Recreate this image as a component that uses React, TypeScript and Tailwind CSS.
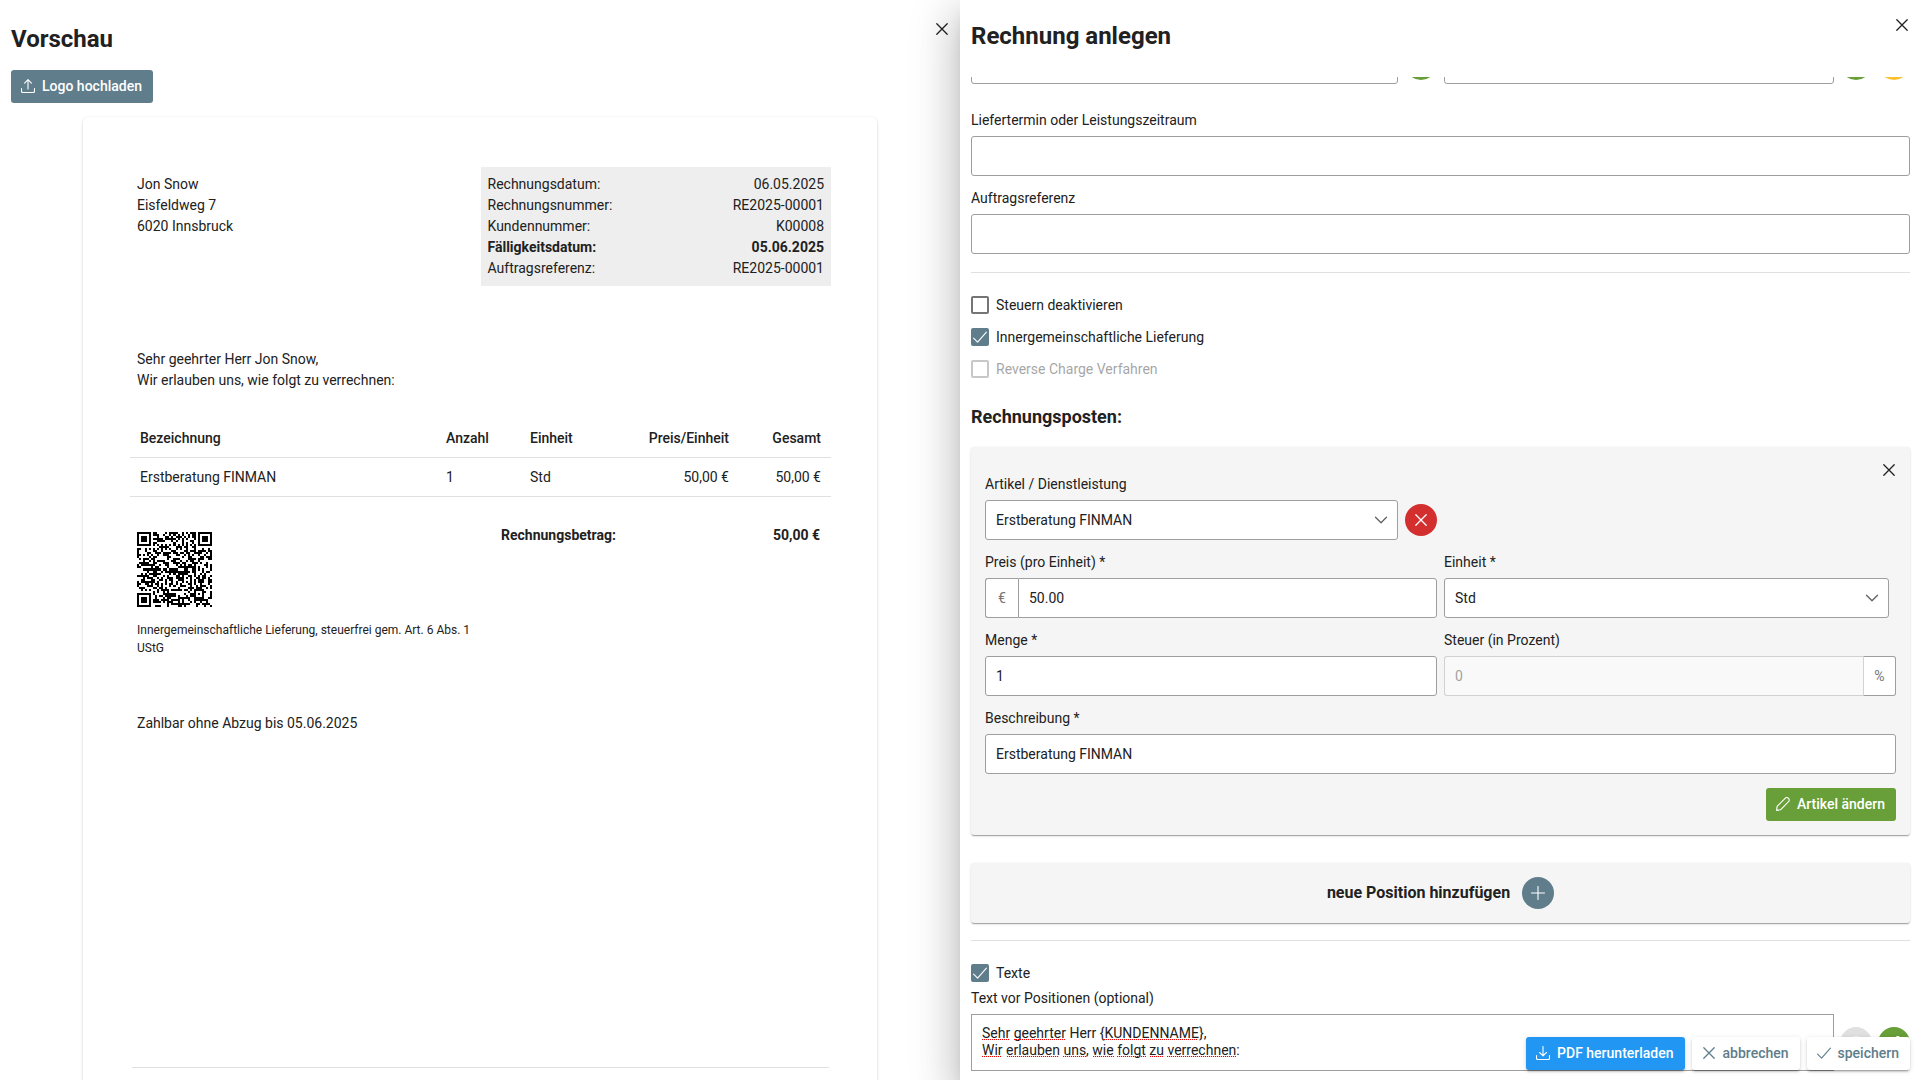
import { useState } from 'react';
import type { ReactNode } from 'react';

const ICONS = {
  upload: 'M7 10V0.8M3.6 4.1L7 0.7l3.4 3.4M0.5 9.5v2.6c0 .8.6 1.4 1.4 1.4h10.2c.8 0 1.4-.6 1.4-1.4V9.5',
  download: 'M7 0.5V9.8M3.6 6.5L7 9.9l3.4-3.4M0.5 9.5v2.6c0 .8.6 1.4 1.4 1.4h10.2c.8 0 1.4-.6 1.4-1.4V9.5',
  times: 'M1.8 1.8l10.4 10.4M12.2 1.8L1.8 12.2',
  plus: 'M7 0.5v13M0.5 7h13',
  check: 'M0.6 8.2l4 4L13.4 2.2',
  chevron: 'M1.5 4.2L7 9.7l5.5-5.5',
  pencil: 'M0.6 13.4l.5-4 8-8.1c.9-.9 2.4-.9 3.4 0 1 1 1 2.5 0 3.4l-8 8.1z',
  question: 'M3.6 4.200C3.600 2 5 0.800 7 0.800s3.400 1.300 3.400 3.200c0 2.600-3.400 2.500-3.400 5M7 12.500v.6',
};

const Icon = ({ name, className = 'w-3.5 h-3.5' }: { name: keyof typeof ICONS; className?: string }) => (
  <svg
    viewBox="0 0 14 14"
    className={`shrink-0 ${className}`}
    fill="none"
    stroke="currentColor"
    strokeWidth={name === 'times' || name === 'chevron' ? 1.3 : 1.1}
    strokeLinecap="round"
    strokeLinejoin="round"
    aria-hidden="true"
  >
    <path d={ICONS[name]} />
  </svg>
);

const QR_SIZE = 37;

const finder = (x: number, y: number, ox: number, oy: number) => {
  const dx = x - ox;
  const dy = y - oy;
  if (dx < -1 || dy < -1 || dx > 7 || dy > 7) return null;
  const d = Math.max(Math.abs(dx - 3), Math.abs(dy - 3));
  return d === 3 || d <= 1;
};

const qrPath = () => {
  let seed = 20250506;
  let path = '';
  for (let y = 0; y < QR_SIZE; y++) {
    for (let x = 0; x < QR_SIZE; x++) {
      seed = (seed * 1103515245 + 12345) % 2147483648;
      let on = seed / 2147483648 > 0.5;
      if (x === 6) on = y % 2 === 0;
      if (y === 6) on = x % 2 === 0;
      const align = Math.max(Math.abs(x - 30), Math.abs(y - 30));
      if (align <= 2) on = align !== 1;
      const f = finder(x, y, 0, 0) ?? finder(x, y, QR_SIZE - 7, 0) ?? finder(x, y, 0, QR_SIZE - 7);
      if (f !== null) on = f;
      if (on) path += `M${x} ${y}h1v1h-1z`;
    }
  }
  return path;
};

const inputClass =
  'h-10 w-full min-w-0 rounded-[3px] border border-[#9e9e9e] bg-white px-2.5 text-sm text-[#212121] outline-none focus:border-[#607d8b]';

const Field = ({ label, id, children }: { label: string; id: string; children: ReactNode }) => (
  <div>
    <label htmlFor={id} className="block mb-1.5 text-sm leading-5">
      {label}
    </label>
    {children}
  </div>
);

const Select = ({ id, value, className = '' }: { id: string; value: string; className?: string }) => (
  <div className={`relative ${className}`}>
    <select id={id} defaultValue={value} className={`${inputClass} appearance-none`}>
      <option>{value}</option>
    </select>
    <Icon name="chevron" className="absolute right-2.5 top-[13px] w-3.5 h-3.5 text-[#616161] pointer-events-none" />
  </div>
);

const Round = ({ label, className, children }: { label: string; className: string; children?: ReactNode }) => (
  <button
    type="button"
    aria-label={label}
    className={`w-8 h-8 shrink-0 rounded-full flex items-center justify-center text-white ${className}`}
  >
    {children}
  </button>
);

const Checkbox = ({ id, label, initial = false, disabled = false }: { id: string; label: string; initial?: boolean; disabled?: boolean }) => {
  const [checked, setChecked] = useState(initial);
  return (
    <div className={`flex items-center gap-[7px] h-[18px] ${disabled ? 'opacity-40' : ''}`}>
      <span className="relative w-[18px] h-[18px]">
        <input
          id={id}
          type="checkbox"
          checked={checked}
          disabled={disabled}
          onChange={(e) => setChecked(e.target.checked)}
          className="block w-[18px] h-[18px] appearance-none rounded-[2px] border-2 border-[#757575] bg-white checked:border-[#607d8b] checked:bg-[#607d8b]"
        />
        {checked && <Icon name="check" className="absolute left-0.5 top-0.5 w-3.5 h-3.5 text-white pointer-events-none" />}
      </span>
      <label htmlFor={id} className="text-sm leading-[18px]">
        {label}
      </label>
    </div>
  );
};

const buttonClass = 'h-[33px] pl-2.5 pr-[11px] pb-px rounded-[3px] flex items-center gap-[7px] text-sm font-medium';
const cardClass =
  'rounded-[3px] shadow-[0_2px_1px_-1px_rgba(0,0,0,0.2),0_1px_1px_0_rgba(0,0,0,0.14),0_1px_3px_0_rgba(0,0,0,0.12)]';
const raisedClass =
  'shadow-[0_3px_1px_-2px_rgba(0,0,0,0.2),0_2px_2px_0_rgba(0,0,0,0.14),0_1px_5px_0_rgba(0,0,0,0.12)]';

const details = [
  { label: 'Rechnungsdatum:', value: '06.05.2025' },
  { label: 'Rechnungsnummer:', value: 'RE2025-00001' },
  { label: 'Kundennummer:', value: 'K00008' },
  { label: 'Fälligkeitsdatum:', value: '05.06.2025', bold: true },
  { label: 'Auftragsreferenz:', value: 'RE2025-00001' },
];

const Preview = () => (
  <section className="relative w-1/2 h-full px-[11px] pt-[25px] flex flex-col">
    <h2 className="text-2xl leading-[29px] font-bold">Vorschau</h2>
    <button type="button" aria-label="Vorschau schließen" className="absolute right-[11px] top-[22px]">
      <Icon name="times" />
    </button>
    <button type="button" className={`${buttonClass} mt-4 shrink-0 self-start bg-[#607d8b] text-white`}>
      <Icon name="upload" />
      Logo hochladen
    </button>

    <div className="mt-3.5 mx-auto w-full max-w-[794px] h-[1123px] shrink-0 pl-[47px] pr-[46px] pt-[50px] flex flex-col bg-white rounded-[5px] shadow-[0_1px_3px_rgba(0,0,0,0.2)]">
      <div className="flex justify-between items-start">
        <address className="not-italic pl-[7px] pt-[7px] leading-[21px]">
          Jon Snow
          <br />
          Eisfeldweg 7
          <br />
          6020 Innsbruck
        </address>
        <dl className="w-1/2 bg-[#eeeeee] p-[7px] leading-[21px]">
          {details.map((d) => (
            <div key={d.label} className={`flex justify-between ${d.bold ? 'font-bold' : ''}`}>
              <dt>{d.label}</dt>
              <dd>{d.value}</dd>
            </div>
          ))}
        </dl>
      </div>

      <p className="mt-[63px] pl-[7px] leading-[21px]">
        Sehr geehrter Herr Jon Snow,
        <br />
        Wir erlauben uns, wie folgt zu verrechnen:
      </p>

      <table className="mt-7 w-full table-fixed">
        <thead>
          <tr className="h-[38px] border-b border-[#e0e0e0] text-left">
            <th className="w-[306px] px-2.5 font-medium">Bezeichnung</th>
            <th className="w-[84px] px-2.5 font-medium">Anzahl</th>
            <th className="w-[90px] px-2.5 font-medium">Einheit</th>
            <th className="px-2.5 font-medium text-right">Preis/Einheit</th>
            <th className="w-[92px] px-2.5 font-medium text-right">Gesamt</th>
          </tr>
        </thead>
        <tbody>
          <tr className="h-[39px] border-b border-[#e0e0e0]">
            <td className="px-2.5">Erstberatung FINMAN</td>
            <td className="px-2.5">1</td>
            <td className="px-2.5">Std</td>
            <td className="px-2.5 text-right">50,00 €</td>
            <td className="px-2.5 text-right">50,00 €</td>
          </tr>
        </tbody>
      </table>

      <div className="mt-7 flex justify-between items-start">
        <div className="w-1/2 px-[7px] pt-[7px]">
          <svg viewBox="0 0 37 37" className="w-[75px] h-[75px]" shapeRendering="crispEdges" role="img" aria-label="QR-Code">
            <path d={qrPath()} fill="#000" />
          </svg>
          <p className="mt-3.5 text-xs leading-[18px]">
            Innergemeinschaftliche Lieferung, steuerfrei gem. Art. 6 Abs. 1 UStG
          </p>
        </div>
        <div className="w-[330px] pr-[11px] flex justify-between font-bold leading-[21px]">
          <span>Rechnungsbetrag:</span>
          <span>50,00 €</span>
        </div>
      </div>

      <p className="mt-14 pl-[7px] leading-[21px]">Zahlbar ohne Abzug bis 05.06.2025</p>
      <hr className="mt-auto mb-[172px] mx-0.5 border-[#e0e0e0]" />
    </div>
  </section>
);

// marks under the words the spell checker does not know: [x, width, line]
const misspelled = [
  [11, 28, 0],
  [43, 51, 0],
  [133, 94, 0],
  [11, 20, 1],
  [36, 52, 1],
  [92, 24, 1],
  [122, 21, 1],
  [146, 29, 1],
  [179, 14, 1],
  [196, 69, 1],
];

const InvoiceForm = () => (
  <section className="relative w-1/2 h-full flex flex-col bg-white shadow-[0_11px_15px_-7px_rgba(0,0,0,0.2),0_24px_38px_3px_rgba(0,0,0,0.14),0_9px_46px_8px_rgba(0,0,0,0.12)]">
    <header className="h-[77px] shrink-0 px-[11px] pt-[22px]">
      <h2 className="text-2xl leading-[29px] font-bold">Rechnung anlegen</h2>
      <button type="button" aria-label="Schließen" className="absolute right-[11px] top-[18px]">
        <Icon name="times" />
      </button>
    </header>

    <form className="flex-1 overflow-hidden pl-[11px] pr-2.5" onSubmit={(e) => e.preventDefault()}>
      <div className="-mt-[33px] flex items-center">
        <input aria-label="Rechnungsdatum" className={`${inputClass} flex-[428]`} />
        <Round label="Datum übernehmen" className="mx-[7px] bg-[#689f38]" />
        <input aria-label="Kunde" className={`${inputClass} flex-[389]`} />
        <Round label="Kunde hinzufügen" className="ml-1.5 bg-[#689f38]" />
        <Round label="Kunde bearbeiten" className="ml-1.5 bg-[#fbc02d]" />
      </div>

      <div className="mt-[26px] flex flex-col gap-3">
        <Field label="Liefertermin oder Leistungszeitraum" id="delivery">
          <input id="delivery" className={inputClass} />
        </Field>
        <Field label="Auftragsreferenz" id="reference">
          <input id="reference" className={inputClass} />
        </Field>
      </div>

      <hr className="mt-[18px] mb-[23px] border-[#e0e0e0]" />

      <div className="flex flex-col gap-3.5">
        <Checkbox id="no-tax" label="Steuern deaktivieren" />
        <Checkbox id="intra-eu" label="Innergemeinschaftliche Lieferung" initial />
        <Checkbox id="reverse-charge" label="Reverse Charge Verfahren" disabled />
      </div>

      <h3 className="mt-[27px] text-lg leading-6 font-bold">Rechnungsposten:</h3>

      <div className={`relative mt-[18px] px-3.5 pt-[27px] pb-3.5 bg-[#f5f5f5] ${cardClass}`}>
        <button type="button" aria-label="Position entfernen" className="absolute right-3.5 top-4">
          <Icon name="times" />
        </button>
        <div className="grid grid-cols-2 gap-x-[7px] gap-y-3">
          <Field label="Artikel / Dienstleistung" id="article">
            <div className="flex items-center gap-[7px]">
              <Select id="article" value="Erstberatung FINMAN" className="flex-1" />
              <Round label="Artikel entfernen" className="bg-[#d32f2f]">
                <Icon name="times" />
              </Round>
            </div>
          </Field>
          <div />
          <Field label="Preis (pro Einheit) *" id="price">
            <div className="flex">
              <span className="w-[33px] h-10 shrink-0 flex items-center justify-center rounded-l-[3px] border border-r-0 border-[#9e9e9e] bg-white text-[#757575]">
                €
              </span>
              <input id="price" defaultValue="50.00" className={`${inputClass} rounded-l-none`} />
            </div>
          </Field>
          <Field label="Einheit *" id="unit">
            <Select id="unit" value="Std" className="mr-[7px]" />
          </Field>
          <Field label="Menge *" id="amount">
            <input id="amount" defaultValue="1" className={inputClass} />
          </Field>
          <Field label="Steuer (in Prozent)" id="tax">
            <div className="flex">
              <input id="tax" disabled defaultValue="0" className={`${inputClass} rounded-r-none border-r-0 opacity-40`} />
              <span className="w-[33px] h-10 shrink-0 flex items-center justify-center rounded-r-[3px] border border-[#9e9e9e] border-l-[#d3d3d3] bg-white text-[#757575]">
                %
              </span>
            </div>
          </Field>
          <div className="col-span-2">
            <Field label="Beschreibung *" id="description">
              <input id="description" defaultValue="Erstberatung FINMAN" className={inputClass} />
            </Field>
          </div>
        </div>
        <button type="button" className={`${buttonClass} mt-3.5 ml-auto bg-[#689f38] text-white`}>
          <Icon name="pencil" />
          Artikel ändern
        </button>
      </div>

      <div className={`mt-7 p-3.5 flex items-center justify-center gap-3 bg-[#f5f5f5] ${cardClass}`}>
        <span className="text-base font-bold">neue Position hinzufügen</span>
        <Round label="Position hinzufügen" className="bg-[#607d8b]">
          <Icon name="plus" />
        </Round>
      </div>

      <hr className="mt-[17px] mb-[23px] border-[#e0e0e0]" />

      <Checkbox id="texts" label="Texte" initial />
      <label htmlFor="text-before" className="block mt-1.5 mb-1.5 text-sm leading-5">
        Text vor Positionen (optional)
      </label>
      <div className="flex items-center gap-1.5">
        <div className="relative flex-1 h-[57px]">
          <textarea
            id="text-before"
            spellCheck={false}
            defaultValue={'Sehr geehrter Herr {KUNDENNAME},\nWir erlauben uns, wie folgt zu verrechnen:'}
            className="block w-full h-full resize-none overflow-hidden border border-[#9e9e9e] bg-white px-2.5 py-2.5 text-sm leading-[17px] outline-none"
          />
          <svg className="absolute left-0 top-0 w-72 h-14 pointer-events-none" aria-hidden="true">
            {misspelled.map(([x, w, line]) => (
              <path key={`${x}-${line}`} d={`M${x} ${25.5 + line * 17}h${w}`} stroke="#f00000" strokeDasharray="1.2 0.8" />
            ))}
          </svg>
        </div>
        <Round label="Platzhalter anzeigen" className="bg-[#e0e0e0] text-[#616161]">
          <Icon name="question" />
        </Round>
        <Round label="Text bearbeiten" className="bg-[#689f38]">
          <Icon name="pencil" />
        </Round>
      </div>
    </form>

    <div className="absolute right-2.5 bottom-2.5 flex gap-[7px]">
      <button type="button" className={`${buttonClass} ${raisedClass} bg-[#2196f3] text-white`}>
        <Icon name="download" />
        PDF herunterladen
      </button>
      <button type="button" className={`${buttonClass} ${raisedClass} bg-white text-[#607d8b]`}>
        <Icon name="times" />
        abbrechen
      </button>
      <button type="button" className={`${buttonClass} ${raisedClass} bg-white text-[#607d8b]`}>
        <Icon name="check" />
        speichern
      </button>
    </div>
  </section>
);

const App = () => (
  <main className="h-screen flex overflow-hidden bg-white font-['Roboto',sans-serif] text-sm text-[#212121]">
    <Preview />
    <InvoiceForm />
  </main>
);

export default App;
